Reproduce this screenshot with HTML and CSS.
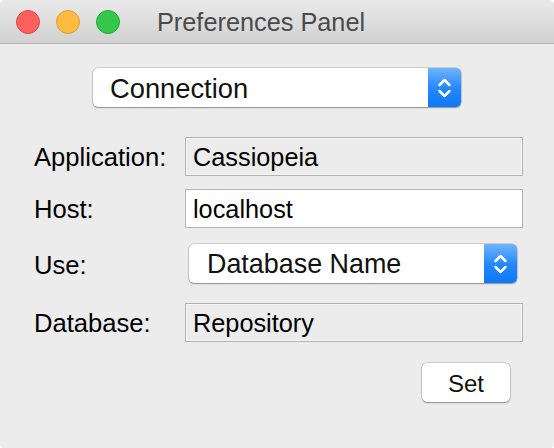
FILE: index.html
```html
<!DOCTYPE html>
<html>
<head>
<meta charset="utf-8">
<link rel="stylesheet" href="styles.css">
</head>
<body>
<div class="window">
  <div class="titlebar">
    <div class="lights">
      <span class="light red"></span>
      <span class="light yellow"></span>
      <span class="light green"></span>
    </div>
    <div class="title">Preferences Panel</div>
  </div>
  <div class="content">
    <div class="popup popup-main">
      <span class="popup-text">Connection</span>
      <span class="stepper">
        <svg width="33" height="39" viewBox="0 0 33 39"><path d="M11.5 17 L16.5 12 L21.5 17 M11.5 23 L16.5 28 L21.5 23" fill="none" stroke="#fff" stroke-width="2.5" stroke-linecap="round" stroke-linejoin="round"/></svg>
      </span>
    </div>
    <div class="form">
      <div class="row row-app">
        <label class="label">Application:</label>
        <div class="field disabled">Cassiopeia</div>
      </div>
      <div class="row row-host">
        <label class="label">Host:</label>
        <div class="field">localhost</div>
      </div>
      <div class="row row-use">
        <label class="label">Use:</label>
        <div class="popup popup-use">
          <span class="popup-text">Database Name</span>
          <span class="stepper">
            <svg width="33" height="39" viewBox="0 0 33 39"><path d="M11.5 17 L16.5 12 L21.5 17 M11.5 23 L16.5 28 L21.5 23" fill="none" stroke="#fff" stroke-width="2.5" stroke-linecap="round" stroke-linejoin="round"/></svg>
          </span>
        </div>
      </div>
      <div class="row row-db">
        <label class="label">Database:</label>
        <div class="field disabled">Repository</div>
      </div>
    </div>
    <div class="actions">
      <button class="btn">Set</button>
    </div>
  </div>
</div>
</body>
</html>
```
FILE: styles.css
```css
html, body {
  margin: 0;
  padding: 0;
  background: #ffffff;
}
body {
  font-family: "Liberation Sans", Arial, sans-serif;
  width: 554px;
  height: 448px;
  overflow: hidden;
}
.window {
  width: 554px;
  height: 448px;
  background: #ececec;
  border-radius: 5px 5px 4px 4px;
  overflow: hidden;
  display: flex;
  flex-direction: column;
}
.titlebar {
  height: 43px;
  flex: none;
  background: linear-gradient(#e9e9e9, #d1d1d1);
  border-bottom: 1px solid #b3b3b3;
  display: flex;
  align-items: center;
  position: relative;
}
.lights {
  display: flex;
  gap: 16px;
  padding-left: 16px;
  padding-top: 1px;
}
.light {
  width: 24px;
  height: 24px;
  border-radius: 50%;
  box-sizing: border-box;
}
.red { background: #fc605c; border: 1px solid #de4a47; }
.yellow { background: #fdbc40; border: 1px solid #de9f34; }
.green { background: #34c84a; border: 1px solid #27aa35; }
.title {
  margin-left: 37px;
  font-size: 25.3px;
  color: #4a4a4a;
  line-height: 1;
  padding-top: 2px;
}
.content {
  flex: 1;
  display: flex;
  flex-direction: column;
  padding-top: 24px;
}
.popup {
  display: flex;
  align-items: center;
  background: #fff;
  border-radius: 5px;
  box-shadow: 0 0 0 0.5px rgba(0,0,0,0.25), 0 1px 1.5px rgba(0,0,0,0.3);
  height: 39px;
  box-sizing: border-box;
  overflow: hidden;
}
.popup-main {
  width: 368px;
  margin: 0 auto;
}
.popup-text {
  flex: 1;
  font-size: 27.3px;
  color: #111;
  padding-left: 17px;
  padding-top: 2px;
  line-height: 1;
}
.popup-use .popup-text { padding-left: 18px; font-size: 26.9px; }
.stepper {
  width: 33px;
  height: 39px;
  flex: none;
  background: linear-gradient(#6fb4fb, #2187fb 55%, #0d79f6);
  display: flex;
}
.form {
  margin-top: 30px;
  padding-left: 34px;
  display: flex;
  flex-direction: column;
}
.row {
  display: flex;
  align-items: center;
  height: 39px;
}
.row-host { margin-top: 13px; }
.row-use { margin-top: 16px; }
.row-db { margin-top: 20px; }
.label {
  width: 151px;
  font-size: 25.6px;
  color: #000;
  line-height: 1;
  padding-top: 2px;
}
.row-use .label { padding-top: 5px; }
.field {
  width: 338px;
  height: 39px;
  box-sizing: border-box;
  border: 1px solid #b2b2b2;
  background: #fff;
  font-size: 25.3px;
  color: #000;
  padding-left: 7px;
  padding-top: 2px;
  display: flex;
  align-items: center;
}
.field.disabled {
  background: #ececec;
  box-shadow: inset 0 0 0 1px #f6f6f6;
}
.popup-use {
  width: 328px;
  margin-left: 4px;
}
.actions {
  display: flex;
  justify-content: flex-end;
  padding-right: 44px;
  margin-top: 21px;
}
.btn {
  width: 88px;
  height: 39px;
  background: #fff;
  border: none;
  border-radius: 5px;
  box-shadow: 0 0 0 0.5px rgba(0,0,0,0.25), 0 1px 1.5px rgba(0,0,0,0.3);
  font-family: "Liberation Sans", Arial, sans-serif;
  font-size: 24px;
  color: #111;
  padding: 2px 0 0 0;
}
```
